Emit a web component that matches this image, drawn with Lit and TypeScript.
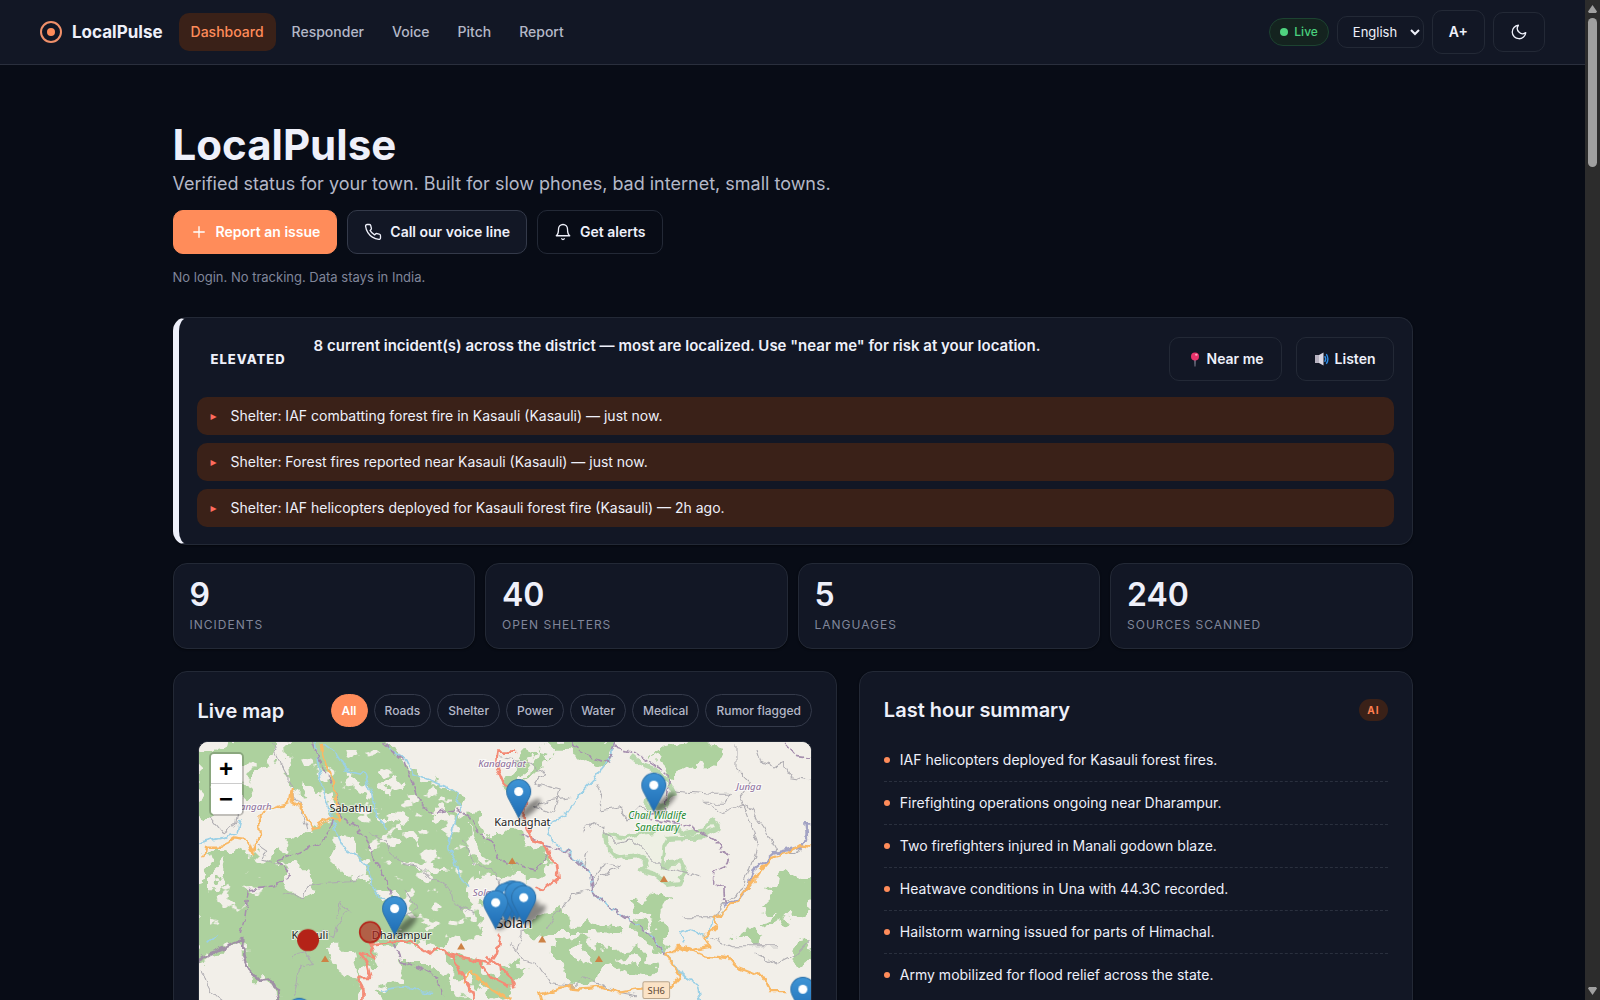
import { LitElement, html, css, svg } from "lit";
import { customElement, state } from "lit/decorators.js";
import { classMap } from "lit/directives/class-map.js";

const FONT = css`Inter, "Liberation Sans", sans-serif`;

/* ---------- icons ---------- */
const stroke = (body: unknown, size = 18) => html`
  <svg width=${size} height=${size} viewBox="0 0 24 24" fill="none" stroke="currentColor"
    stroke-width="1.75" stroke-linecap="round" stroke-linejoin="round" aria-hidden="true">${body}</svg>`;
const plusIcon = stroke(svg`<path d="M12 5v14M5 12h14"/>`);
const phoneIcon = stroke(svg`<path d="M22 16.92v3a2 2 0 0 1-2.18 2 19.79 19.79 0 0 1-8.63-3.07 19.5 19.5 0 0 1-6-6 19.79 19.79 0 0 1-3.07-8.67A2 2 0 0 1 4.11 2h3a2 2 0 0 1 2 1.72c.13.96.36 1.9.7 2.81a2 2 0 0 1-.45 2.11L8.09 9.91a16 16 0 0 0 6 6l1.27-1.27a2 2 0 0 1 2.11-.45c.91.34 1.85.57 2.81.7A2 2 0 0 1 22 16.92z"/>`);
const bellIcon = stroke(svg`<path d="M18 8A6 6 0 0 0 6 8c0 7-3 9-3 9h18s-3-2-3-9"/><path d="M13.73 21a2 2 0 0 1-3.46 0"/>`);
const moonIcon = stroke(svg`<path d="M21 12.79A9 9 0 1 1 11.21 3 7 7 0 0 0 21 12.79z"/>`);
const pushpinIcon = html`
  <svg width="14" height="15" viewBox="0 0 14 15" aria-hidden="true">
    <path d="M7.300 7h1.400l-.3 7.600h-.8z" fill="#8d8fa0"/>
    <circle cx="8" cy="4.400" r="4" fill="#e8336b"/>
    <ellipse cx="9.300" cy="2.800" rx="1.300" ry="1" fill="#ff9fb9"/>
  </svg>`;
const speakerIcon = html`
  <svg width="15" height="14" viewBox="0 0 15 14" aria-hidden="true">
    <path d="M1 3h4v8H1z" fill="#b7b2c0"/>
    <path d="M5 3 9.500.5v13L5 11z" fill="#dcd8e3"/>
    <path d="M10.700 4.200q2 2.800 0 5.600" fill="none" stroke="#2f8ee8" stroke-width="1.400"/>
    <path d="M12.300 2.200q3.200 4.800 0 9.600" fill="none" stroke="#2f8ee8" stroke-width="1.400"/>
  </svg>`;

/* ---------- map ---------- */
interface Pin { x: number; y: number }
const PINS: Pin[] = [
  { x: 985, y: 184 }, { x: 1390, y: 165 }, { x: 965, y: 488 }, { x: 948, y: 495 },
  { x: 980, y: 490 }, { x: 1000, y: 502 }, { x: 916, y: 517 }, { x: 613, y: 535 },
  { x: 327, y: 840 }, { x: 1837, y: 777 },
];
const PEAKS = [[405, 686], [813, 648], [966, 392], [1421, 446], [1056, 627], [1226, 686]];

@customElement("district-map")
export class DistrictMap extends LitElement {
  static styles = css`
    :host { display: block; position: relative; overflow: hidden; background: #f2efe9; font-family: ${FONT}; }
    .canvas { display: block; width: 100%; }
    .label { font-family: "Noto Sans", sans-serif; paint-order: stroke; stroke: #ffffffb0; stroke-width: 6px; fill: #222; }
    .town { font-size: 33px; }
    .city { font-size: 42px; }
    .region { font-size: 29px; font-style: italic; fill: #8a6a98; }
    .park { font-size: 30px; font-style: italic; fill: #1f8a2f; }
    .shield { font-size: 28px; fill: #5b4632; font-family: "Noto Sans", sans-serif; }
    .zoom { position: absolute; left: 10px; top: 10px; display: grid; border: 2px solid #00000033; border-radius: 5px; background-clip: padding-box; }
    .zoom button { width: 31px; height: 30px; border: 0; padding: 0; background: #fff; color: #000; font: 700 24px/28px "Liberation Sans", sans-serif; }
    .zoom button:first-child { border-bottom: 1px solid #ccc; border-radius: 3px 3px 0 0; }
    .zoom button:last-child { border-radius: 0 0 3px 3px; }
  `;

  render() {
    return html`
      <svg class="canvas" viewBox="27 36 1836 1080" role="img" aria-label="Map of the Solan district">
        <defs>
          <filter id="rough" x="0" y="0" width="1" height="1" color-interpolation-filters="sRGB">
            <feTurbulence type="fractalNoise" baseFrequency="0.022" numOctaves="3" seed="4" result="n"/>
            <feDisplacementMap in="SourceGraphic" in2="n" scale="80" xChannelSelector="R" yChannelSelector="G" result="d"/>
            <feGaussianBlur in="d" stdDeviation="1.2"/>
          </filter>
          <filter id="jitter" filterUnits="userSpaceOnUse" x="0" y="0" width="1900" height="1200" color-interpolation-filters="sRGB">
            <feTurbulence type="fractalNoise" baseFrequency="0.035" numOctaves="2" seed="9" result="n"/>
            <feDisplacementMap in="SourceGraphic" in2="n" scale="26" xChannelSelector="R" yChannelSelector="G" result="d"/>
            <feGaussianBlur in="d" stdDeviation="0.8"/>
          </filter>
          <filter id="clearings" filterUnits="userSpaceOnUse" x="0" y="0" width="1900" height="1200" color-interpolation-filters="sRGB">
            <feTurbulence type="fractalNoise" baseFrequency="0.016 0.022" numOctaves="4" seed="21"/>
            <feColorMatrix values="0 0 0 0 .949  0 0 0 0 .937  0 0 0 0 .914  20 0 0 0 -12.4"/>
            <feComposite in2="SourceGraphic" operator="in"/>
          </filter>
          <filter id="blur"><feGaussianBlur stdDeviation="6"/></filter>
          <linearGradient id="pinFill" x1="0" y1="0" x2="0" y2="1">
            <stop offset="0" stop-color="#3f95d6"/><stop offset="1" stop-color="#1f6db5"/>
          </linearGradient>
        </defs>

        <g filter="url(#rough)">
          <rect x="-60" y="-60" width="2060" height="1260" fill="#f2efe9"/>
          <g fill="#add19e">
            <path d="M20 70 130 40 145 20H250L255 80 240 100 190 120 200 180 150 215 60 270 20 255Z"/>
            <path d="M290 20H585L650 110 720 150 800 185 812 240 860 255 890 310 950 370 975 440 900 430 850 440 830 480 870 520 880 570 850 620 760 640 700 655 640 630 600 660 560 645 545 700 500 740 520 830 470 1130H270L250 750 200 750 165 700 160 630 90 665 20 695V480L55 420 40 370 120 350 190 385 240 385 290 350 350 300 420 270 400 190 330 200 300 150Z"/>
            <path d="M610 690 700 690 780 740 830 810 840 1000 600 1000 610 850 560 790 640 740Z"/>
            <path d="M740 660 850 680 960 790 930 800 850 770 790 720Z"/>
            <path d="M1045 20 1275 20 1262 90 1225 122 1180 92 1130 62 1090 62Z"/>
            <path d="M940 180 985 90 1010 50 1030 60 1000 130 960 200ZM1040 50 1090 70 1050 110 1010 150 1030 90Z"/>
            <path d="M1420 50 1530 25 1590 60 1570 105 1530 98 1480 122 1440 142 1420 92 1380 85Z"/>
            <path d="M905 300 990 298 1010 330 1062 350 1075 385 1062 425 1020 445 975 440 960 400 920 380Z"/>
            <path d="M1790 422 1810 440 1880 430V520L1810 562 1725 590 1710 580 1760 550 1710 545 1750 500 1730 470Z"/>
            <path d="M1635 625 1690 592 1722 608 1695 632 1650 632Z"/>
            <path d="M1790 660 1880 635V700L1800 685Z"/>
            <path d="M1085 640 1180 618 1260 660 1330 655 1412 700 1370 742 1310 732 1260 705 1205 752 1130 745 1095 700Z"/>
            <path d="M1318 520 1380 500 1430 474 1442 500 1410 540 1422 620 1432 668 1380 640 1308 590 1370 560 1325 532Z"/>
            <path d="M1008 600 1050 550 1120 538 1132 588 1180 578 1292 590 1280 622 1210 612 1080 612 1030 625Z"/>
            <path d="M930 690 1000 720 960 800 925 790Z"/>
          </g>
          <g fill="#f2efe9">
            <path d="M275 410 330 395 385 470 360 495 290 490Z"/>
            <path d="M430 310 470 320 500 370 530 400 540 460 480 440 430 400Z"/>
            <path d="M350 150 400 180 415 240 370 250 345 200Z"/>
            <path d="M60 430 110 380 90 470 60 500Z"/>
            <path d="M410 650 490 650 510 720 480 750 440 720Z"/>
            <path d="M830 300 860 340 890 400 840 380Z"/>
            <path d="M640 390 720 400 790 430 730 435 650 410Z"/>
            <path d="M470 140 520 150 540 190 490 175Z"/>
            <path d="M580 250 650 265 640 285 590 275ZM700 250 760 240 790 260 730 275ZM560 160 610 150 640 175 590 190ZM640 310 700 320 690 345 640 335ZM560 470 600 480 640 560 600 530Z"/>
            <path d="M1150 660 1190 650 1200 690 1165 700ZM1280 680 1330 675 1340 695 1290 700ZM1350 560 1400 580 1390 595 1350 580Z"/>
          </g>
        </g>
        <path filter="url(#clearings)" fill="#000" d="M60 60H200V180L60 230ZM320 60H560L640 120 790 200 900 340 930 380 850 600 700 640 500 740 620 600 540 380 440 260 380 190ZM60 430 180 400 240 480 60 600Z"/>

        <g fill="none" stroke-linejoin="round" filter="url(#jitter)">
          <g stroke="#b9d8ae" stroke-width="13">
            <path d="M1320 75 1350 100 1390 115 1430 150 1450 190 1425 225 1370 235 1380 180"/>
            <path d="M1245 312 1250 352 1280 384 1335 375 1372 392 1352 420 1392 432 1435 467 1470 462 1485 425 1472 394 1440 396 1412 412 1420 350 1432 326 1530 322 1582 292 1570 270 1540 302 1490 312 1440 292 1360 308 1300 322Z" fill="#eef0e4"/>
          </g>
          <g stroke="#adabb0" stroke-width="3">
            <path d="M250 40 270 100 300 150 310 200 330 230 350 300"/>
            <path d="M60 260 100 310 140 280 150 230"/>
            <path d="M200 340 230 360 215 390 260 400"/>
            <path d="M280 490 340 500 350 470 400 460 480 455 520 440"/>
            <path d="M440 560 450 520 480 545 440 580 430 620 400 600 380 640"/>
            <path d="M540 310 590 330 600 370 640 400 690 410 720 440 780 470 790 520 850 550"/>
            <path d="M300 680 350 670 370 700 330 710 320 760 310 800"/>
            <path d="M820 330 850 400 920 430 930 470 960 480"/>
            <path d="M930 80 1020 100 1060 130 1040 160 1110 180 1090 250 1030 230 1070 210 1140 200"/>
            <path d="M1220 160 1240 200 1230 240 1290 230 1310 270 1350 230 1370 240"/>
            <path d="M1180 300 1210 275 1250 310 1280 340 1330 330 1380 380 1410 410 1460 420 1500 430 1530 440"/>
            <path d="M1450 180 1560 190 1620 190 1600 220 1540 220 1600 250 1670 220 1720 290 1760 370 1820 370 1840 340"/>
            <path d="M1640 40 1640 120 1680 160 1650 200 1700 330 1690 380 1660 470 1600 520 1570 560 1480 560"/>
            <path d="M1700 60 1710 90 1760 110 1780 100 1800 140 1860 150"/>
            <path d="M1760 650 1620 650 1560 620M1690 665 1760 700 1820 670 1860 630"/>
            <path d="M1070 600 1110 540 1150 490 1200 480 1230 440 1290 410 1240 400 1210 440 1180 410 1190 370"/>
            <path d="M960 640 1000 690 1040 700 1080 760 1150 770 1180 740 1290 790 1340 800"/>
            <path d="M930 560 1000 600 980 660M30 720 60 780 100 810M640 480 680 530 650 560"/>
          </g>
          <g stroke="#9bd0e6" stroke-width="5">
            <path d="M375 36 385 110 400 180 420 240 440 310 460 350 500 380 530 410 545 460 570 500 600 530 640 560"/>
            <path d="M400 40 440 70 470 120 520 130 545 190 560 260 590 290"/>
            <path d="M590 50 650 90 670 130 740 160 800 185 810 235 790 290 775 350 800 410 830 470"/>
            <path d="M1275 40 1250 100 1210 150 1170 190 1130 250 1080 280 1070 310 1090 340 1140 370 1200 430 1205 480 1240 520 1290 550 1350 590 1390 630 1430 675 1480 740 1520 760 1530 810"/>
            <path d="M1480 640 1470 610 1500 600 1550 620 1570 560 1600 545M27 340 90 325 140 310 150 270M50 640 80 610M570 780 640 770 720 790"/>
          </g>
          <g stroke="#a68fae" stroke-width="5" stroke-dasharray="22 6">
            <path d="M365 36 390 100 430 170 450 260 500 290 560 390 600 480 620 540 610 640 630 690 700 720 740 740 760 800"/>
            <path d="M430 270 405 330 350 360 260 390 300 430 250 470 175 480 165 560 150 610"/>
            <path d="M580 40 640 90 680 200 720 250 800 235 850 270 860 310 910 340 930 390 960 400 1040 420 1075 370 1060 340 990 310"/>
            <path d="M1275 40 1250 100 1170 70 1150 36M1275 50 1340 70 1430 130 1440 160 1420 240 1360 260 1500 290 1570 330 1615 380 1605 410 1570 425 1570 460 1600 470 1605 525"/>
            <path d="M1780 36 1820 80 1860 85M1060 345 1130 365 1200 430 1205 480 1240 520 1290 550 1350 590 1430 675"/>
          </g>
          <g stroke="#a090a6" stroke-width="8">
            <path d="M27 690 60 670 110 650 160 630 160 680 185 730 210 755 245 750 260 780 270 830"/>
            <path d="M1600 530 1650 500 1680 460 1690 420 1750 370 1830 350 1850 320 1845 280 1863 280" stroke="#a3a3c4"/>
          </g>
          <g stroke="#f9b864" stroke-width="7">
            <path d="M395 36 400 80 415 110 430 160 435 210 445 270 420 265 365 300 340 240 310 220 305 180 300 220 250 235 205 250 210 320 195 340 190 370 175 330 130 325 95 350 45 350 40 385"/>
            <path d="M1863 350 1830 345 1790 370 1740 385 1710 420 1690 450 1640 510 1605 545 1570 560 1580 590 1540 620 1560 650 1500 660 1480 655"/>
            <path d="M1430 675 1470 650 1530 675 1620 685 1640 710 1720 740 1740 780 1790 780M1430 675 1470 735 1440 770 1340 780 1290 790 1230 770 1170 775 1120 770 1050 790 1060 830"/>
            <path d="M820 760 840 720 880 760 960 810"/>
          </g>
          <g stroke="#f48b76" stroke-width="8">
            <path d="M975 65 925 65 920 110 940 160 975 190 1010 200 1000 260 1015 300 1025 330 1060 340 1080 380 1100 400 1105 440 1060 480 1030 470"/>
            <path d="M520 830 520 780 500 740 540 740 530 700 510 670 555 680 540 640 600 635 660 635 720 670 740 650 780 675 840 685 900 700 920 670 930 610M780 675 820 740 850 790 850 830M840 685 870 700 900 740 960 770M890 680 940 720 960 740 970 775"/>
          </g>
        </g>

        <g fill="#cd8245">
          ${PEAKS.map(([x, y]) => svg`<path d=${`M${x} ${y - 10}l12 20h-24z`}/>`)}
        </g>
        <text class="label region" x="150" y="240">angarh</text>
        <text class="label region" x="864" y="110">Kandaghat</text>
        <text class="label region" x="848" y="497">Solan</text>
        <text class="label region" x="1638" y="179">Junga</text>
        <text class="label town" x="418" y="245">Sabathu</text>
        <text class="label town" x="912" y="289">Kandaghat</text>
        <text class="label town" x="304" y="628">Kasauli</text>
        <text class="label town" x="545" y="628">Dharampur</text>
        <text class="label city" x="917" y="595">Solan</text>
        <text class="label park" x="1401" y="266" text-anchor="middle">Chail Wildlife</text>
        <text class="label park" x="1401" y="302" text-anchor="middle">Sanctuary</text>
        <rect x="1358" y="755" width="80" height="50" rx="5" fill="#fbe3c6" stroke="#b9a58c" stroke-width="3"/>
        <text class="shield" x="1398" y="791" text-anchor="middle">SH6</text>

        <g fill="#000" opacity=".45" filter="url(#blur)">
          ${PINS.map((p) => svg`<ellipse rx="42" ry="14" transform=${`translate(${p.x + 34} ${p.y + 52}) rotate(-42)`}/>`)}
        </g>
        ${PINS.map((p) => svg`
          <g transform=${`translate(${p.x - 37} ${p.y - 37}) scale(3)`}>
            <path d="M12.5.5C5.9.5.5 5.9.5 12.500c0 2.400.6 4.500 1.700 6.500L12.500 38.500 22.800 19c1.100-2 1.700-4.100 1.700-6.500C24.500 5.900 19.100.5 12.500.5Z" fill="url(#pinFill)" stroke="#2a6fa8"/>
            <circle cx="12.500" cy="12.500" r="4.500" fill="#fff"/>
          </g>`)}
        <circle cx="354" cy="630" r="33" fill="#b42318"/>
        <circle cx="540" cy="606" r="31" fill="#b42318" fill-opacity=".65" stroke="#b42318" stroke-width="5"/>
      </svg>
      <div class="zoom">
        <button aria-label="Zoom in">+</button>
        <button aria-label="Zoom out">−</button>
      </div>`;
  }
}

/* ---------- page ---------- */
const NAV = ["Dashboard", "Responder", "Voice", "Pitch", "Report"];
const ALERTS = [
  "Shelter: IAF combatting forest fire in Kasauli (Kasauli) — just now.",
  "Shelter: Forest fires reported near Kasauli (Kasauli) — just now.",
  "Shelter: IAF helicopters deployed for Kasauli forest fire (Kasauli) — 2h ago.",
];
const STATS: [string, string][] = [["9", "Incidents"], ["40", "Open shelters"], ["5", "Languages"], ["240", "Sources scanned"]];
const FILTERS = ["All", "Roads", "Shelter", "Power", "Water", "Medical", "Rumor flagged"];
const SUMMARY = [
  "IAF helicopters deployed for Kasauli forest fires.",
  "Firefighting operations ongoing near Dharampur.",
  "Two firefighters injured in Manali godown blaze.",
  "Heatwave conditions in Una with 44.3C recorded.",
  "Hailstorm warning issued for parts of Himachal.",
  "Army mobilized for flood relief across the state.",
];

@customElement("app-root")
export class AppRoot extends LitElement {
  @state() private filter = "All";

  static styles = css`
    :host {
      --bg: #080c16; --surface: #121725; --line: #232936; --line-strong: #343a4a;
      --text: #eef0fa; --soft: #b4b8c8; --faint: #80869a; --accent: #ff8c5a; --accent-bg: #3a2118;
      display: flex; height: 100vh; background: var(--bg); color: var(--text);
      font: 400 15px/22px ${FONT};
    }
    * { box-sizing: border-box; }
    h1, h2, p, ul { margin: 0; padding: 0; }
    ul { list-style: none; }
    button, select { font: inherit; color: inherit; }
    .page { flex: 1; min-width: 0; overflow: hidden; }

    .topbar { display: flex; align-items: center; gap: 16px; height: 65px; padding: 0 40px; background: var(--surface); border-bottom: 1px solid #2a2f3d; }
    .brand { display: flex; align-items: center; gap: 10px; color: var(--text); text-decoration: none; font-size: 17px; font-weight: 700; }
    .brand svg { display: block; }
    .nav { display: flex; gap: 4px; flex: 1; }
    .nav a { padding: 8px 12px; border-radius: 10px; color: var(--soft); text-decoration: none; font-size: 14px; font-weight: 500; }
    .nav a.active { background: var(--accent-bg); color: var(--accent); }
    .tools { display: flex; align-items: center; gap: 8px; }
    .live { display: flex; align-items: center; gap: 6px; padding: 2px 10px; border: 1px solid #1d4331; border-radius: 14px; background: #14231f; color: #4ad07d; font-size: 12px; font-weight: 500; }
    .live::before { content: ""; width: 8px; height: 8px; border-radius: 50%; background: #4fd37f; }
    .lang { height: 32px; width: 87px; padding: 0 0 0 11px; border: 1px solid var(--line); border-radius: 10px; background: var(--surface); font-size: 13px; }

    .btn { display: inline-flex; align-items: center; justify-content: center; gap: 8px; height: 44px; padding: 0 16px; border: 1px solid var(--line); border-radius: 10px; background: transparent; font-size: 14px; font-weight: 600; white-space: nowrap; }
    .btn.emoji { gap: 6px; padding: 0 17px; }
    .btn.primary { background: var(--accent); border-color: var(--accent); color: #fff; }
    .btn.secondary { background: var(--surface); border-color: var(--line-strong); }
    .btn.short { height: 40px; }

    .content { max-width: 1280px; margin: 0 auto; padding: 55px 20px 0; }
    .hero h1 { font-size: 42px; line-height: 50px; font-weight: 700; }
    .lead { color: var(--soft); font-size: 18px; line-height: 28px; }
    .actions { display: flex; gap: 10px; padding: 12px 0; }
    .note { color: var(--faint); font-size: 13px; }

    .card { background: var(--surface); border: 1px solid var(--line); border-radius: 14px; box-shadow: 0 1px 2px #0006; }
    .alert { margin-top: 29px; padding: 19px 18px 17px; border-left: 6px solid var(--text); display: grid; gap: 16px; }
    .alert-head { display: flex; align-items: center; gap: 14px; }
    .level { padding: 0 14px; font-size: 13px; font-weight: 800; letter-spacing: 1px; }
    .headline { flex: 1; align-self: flex-start; font-weight: 600; line-height: 18px; }
    .alerts { display: grid; gap: 8px; }
    .alerts li { display: flex; align-items: center; gap: 10px; padding: 8px 14px; border-radius: 10px; background: var(--accent-bg); font-size: 14px; }
    .alerts li::before { content: "▸"; width: 10px; color: #ff6b5e; font: 12px/22px "DejaVu Sans", sans-serif; }

    .stats { display: grid; grid-template-columns: repeat(4, 1fr); gap: 10px; margin-top: 18px; }
    .stat { padding: 13px 16px 11px; }
    .value { font-size: 32px; line-height: 36px; font-weight: 600; }
    .name { color: var(--faint); font-size: 12px; line-height: 24px; letter-spacing: 1px; text-transform: uppercase; }

    .columns { display: grid; grid-template-columns: 6fr 5fr; gap: 22px; margin-top: 22px; }
    .panel { padding: 22px 24px; min-width: 0; }
    .panel-head { display: flex; align-items: center; justify-content: space-between; gap: 12px; }
    .panel h2 { font-size: 20px; line-height: 32px; font-weight: 600; }
    .chips { display: flex; gap: 6px; }
    .chips button { height: 33px; padding: 0 10px; border: 1px solid var(--line-strong); border-radius: 17px; background: transparent; color: var(--soft); font-size: 12px; font-weight: 500; white-space: nowrap; }
    .chips button.on { background: var(--accent); border-color: var(--accent); color: #fff; font-weight: 600; }
    .map { margin-top: 14px; border: 1px solid var(--line); border-radius: 10px; }
    .ai { padding: 0 8px; border-radius: 11px; background: var(--accent-bg); color: #ff7f50; font-size: 10px; font-weight: 700; letter-spacing: 1px; }
    .summary { margin-top: 23px; }
    .summary li { display: flex; align-items: center; gap: 10px; padding: 10px 0; border-bottom: 1px dashed #2a303e; font-size: 14px; }
    .summary li:first-child { padding-top: 0; }
    .summary li:last-child { border-bottom: 0; }
    .summary li::before { content: ""; width: 6px; height: 6px; border-radius: 50%; background: var(--accent); }

    .scrollbar { width: 15px; display: flex; flex-direction: column; align-items: center; justify-content: space-between; padding: 5px 0; background: #2c2c2c; }
    .scrollbar svg { display: block; fill: #a0a0a0; }
    .thumb { width: 9px; height: 15%; margin: 5px 0 auto; border-radius: 5px; background: #9f9f9f; }
  `;

  render() {
    return html`
      <div class="page">
        <header class="topbar">
          <a class="brand" href="#">
            <svg width="22" height="22" viewBox="0 0 22 22" aria-hidden="true">
              <circle cx="11" cy="11" r="10" fill="none" stroke="#f0906a" stroke-width="2"/>
              <circle cx="11" cy="11" r="4" fill="#ff8c5a"/>
            </svg>
            LocalPulse
          </a>
          <nav class="nav">
            ${NAV.map((n, i) => html`<a href="#" class=${classMap({ active: i === 0 })}>${n}</a>`)}
          </nav>
          <div class="tools">
            <span class="live">Live</span>
            <select class="lang" aria-label="Language"><option>English</option></select>
            <button class="btn" aria-label="Larger text">A+</button>
            <button class="btn short" aria-label="Toggle theme">${moonIcon}</button>
          </div>
        </header>

        <main class="content">
          <section class="hero">
            <h1>LocalPulse</h1>
            <p class="lead">Verified status for your town. Built for slow phones, bad internet, small towns.</p>
            <div class="actions">
              <button class="btn primary">${plusIcon}Report an issue</button>
              <button class="btn secondary">${phoneIcon}Call our voice line</button>
              <button class="btn">${bellIcon}Get alerts</button>
            </div>
            <p class="note">No login. No tracking. Data stays in India.</p>
          </section>

          <section class="card alert">
            <div class="alert-head">
              <span class="level">ELEVATED</span>
              <p class="headline">8 current incident(s) across the district — most are localized. Use "near me" for risk at your location.</p>
              <button class="btn emoji">${pushpinIcon}Near me</button>
              <button class="btn emoji">${speakerIcon}Listen</button>
            </div>
            <ul class="alerts">${ALERTS.map((a) => html`<li>${a}</li>`)}</ul>
          </section>

          <section class="stats">
            ${STATS.map(([v, n]) => html`<div class="card stat"><div class="value">${v}</div><div class="name">${n}</div></div>`)}
          </section>

          <div class="columns">
            <section class="card panel">
              <div class="panel-head">
                <h2>Live map</h2>
                <div class="chips">
                  ${FILTERS.map((f) => html`<button class=${classMap({ on: f === this.filter })} @click=${() => (this.filter = f)}>${f}</button>`)}
                </div>
              </div>
              <district-map class="map"></district-map>
            </section>
            <section class="card panel">
              <div class="panel-head"><h2>Last hour summary</h2><span class="ai">AI</span></div>
              <ul class="summary">${SUMMARY.map((s) => html`<li>${s}</li>`)}</ul>
            </section>
          </div>
        </main>
      </div>
      <div class="scrollbar" aria-hidden="true">
        <svg width="9" height="8" viewBox="0 0 9 8"><path d="M4.500 0 9 6.500 8 8H1L0 6.500Z"/></svg>
        <div class="thumb"></div>
        <svg width="9" height="8" viewBox="0 0 9 8"><path d="M4.500 8 9 1.500 8 0H1L0 1.500Z"/></svg>
      </div>`;
  }
}
